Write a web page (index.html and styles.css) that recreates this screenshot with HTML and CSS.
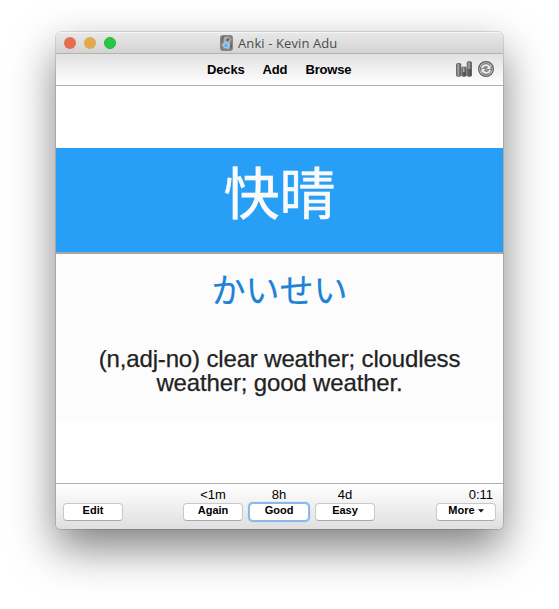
FILE: index.html
```html
<!DOCTYPE html>
<html lang="en">
<head>
<meta charset="utf-8">
<title>Anki - Kevin Adu</title>
<link rel="stylesheet" href="styles.css">
</head>
<body>
<main class="window">
  <header class="titlebar">
    <div class="lights"><i class="light close"></i><i class="light minimize"></i><i class="light expand"></i></div>
    <svg class="app-icon" width="13" height="16" viewBox="0 0 13 16">
      <rect x=".5" y=".5" width="12" height="15" rx="2" fill="#808284" stroke="#858688"/>
      <path d="M3 4Q5 1 9 2L11.500 4.500 9.500 7 11 10 9 14 4 13 2 10 4 7Z" fill="#b0b4b7"/>
      <path d="M5.500 5 8 3 10 4.500 7.500 6.500Z" fill="#626467"/>
      <path d="M2 2 4 1.500 3 6 1.500 8zM10 9.500 12 8v5l-2 1z" fill="#646669"/>
      <path d="M6 7.500 7.300 9.200 9.500 9.500 8 11.200 8.200 13.300 6 12.300 4 13.200 4.200 11 2.700 9.500 4.900 9.200Z" fill="#50b5fa" stroke="#c4e5fa" stroke-width=".5"/>
    </svg>
    <span class="title">Anki - Kevin Adu</span>
  </header>
  <nav class="toolbar">
    <div class="links"><a>Decks</a><a>Add</a><a>Browse</a></div>
    <div class="tools">
      <svg width="16" height="16" viewBox="0 0 16 16">
        <defs><linearGradient id="bar"><stop stop-color="#666"/><stop offset=".4" stop-color="#aaa"/><stop offset="1" stop-color="#444"/></linearGradient></defs>
        <g fill="url(#bar)" stroke="#5c5c5c" stroke-width=".8"><rect x=".5" y="2.500" width="4.300" height="12.800" rx="1"/><rect x="5.800" y="6" width="4.400" height="9.300" rx="1"/><rect x="11.200" y=".7" width="4.300" height="14.600" rx="1"/></g>
        <path d="M6.500 11h3.200v4H6.500zM12 8h3.200v7H12z" fill="#444" opacity=".7"/>
      </svg>
      <svg width="16" height="16" viewBox="0 0 16 16">
        <circle cx="8" cy="8" r="7.400" fill="#d0d0d0" stroke="#5c5c5c" stroke-width="1.200"/>
        <circle cx="8" cy="8" r="5.600" fill="#8c8c8c" stroke="#666" stroke-width=".7"/>
        <path d="M4 7C4.600 3.800 9.400 3.200 11 6M12 9C11.400 12.200 6.600 12.800 5 10" fill="none" stroke="#eee" stroke-width="1.700"/>
        <path d="M12.500 4v4H8.500zM3.500 12v-4h4z" fill="#eee"/>
      </svg>
    </div>
  </nav>
  <section class="review">
    <div class="question" lang="ja">快晴</div>
    <div class="answer">
      <div class="reading" lang="ja">かいせい</div>
      <p class="meaning">(n,adj-no) clear weather; cloudless weather; good weather.</p>
    </div>
  </section>
  <footer class="controls">
    <div class="control left"><span class="due"></span><button>Edit</button></div>
    <div class="choices">
      <div class="control"><span class="due">&lt;1m</span><button>Again</button></div>
      <div class="control"><span class="due">8h</span><button class="focused">Good</button></div>
      <div class="control"><span class="due">4d</span><button>Easy</button></div>
    </div>
    <div class="control right"><span class="due">0:11</span><button class="more">More<svg width="6" height="4" viewBox="0 0 6 4"><path d="M0 .3h6L3 3.500z" fill="#111"/></svg></button></div>
  </footer>
</main>
</body>
</html>
```
FILE: styles.css
```css
* { box-sizing: border-box; }
body { margin: 0; height: 609px; padding: 32px 56px 80px; overflow: hidden; background: #fff; font-family: "Liberation Sans", sans-serif; color: #000; }
.window { width: 447px; height: 497px; display: flex; flex-direction: column; overflow: hidden; border-radius: 5px; background: #fff; box-shadow: 0 0 0 1px rgba(0,0,0,.12), 0 19px 44px rgba(0,0,0,.5); }
.titlebar { flex: 0 0 22px; display: grid; grid-template-columns: 164px 18px 1fr; align-items: center; border-bottom: 1px solid #b3b3b3; background: linear-gradient(#e9e9e9, #d3d3d3); box-shadow: inset 0 1px #f5f5f5; }
.lights { display: flex; gap: 8px; padding-left: 8px; }
.light { width: 12px; height: 12px; border-radius: 50%; }
.close { background: #e46e50; }
.minimize { background: #e0aa4d; }
.expand { background: #2ac840; border: 1px solid #20b735; }
.title { font: 13px/20px "Open Sans", sans-serif; letter-spacing: .1px; color: #4b4b4b; white-space: nowrap; }
.toolbar { flex: 0 0 32px; display: grid; grid-template-columns: 1fr 56px; align-items: center; border-bottom: 1px solid #b0b0b0; background: linear-gradient(#e1e1e1, #fff); }
.links { display: flex; gap: 18px; padding-left: 151px; font-size: 13px; line-height: 16px; font-weight: bold; letter-spacing: -.15px; }
.tools { display: flex; gap: 6px; padding: 0 0 2px 9px; }
.review { flex: 1; padding-top: 62px; text-align: center; }
.question { height: 106px; border-bottom: 2px solid #a6a6a6; background: #279ff6; color: #fafafa; font: 56px/84px "Noto Sans CJK JP", sans-serif; -webkit-text-stroke: .6px #fafafa; }
.answer { height: 167px; background: #fcfcfc; }
.reading { height: 93px; color: #1d82d8; font: 34px/70px "Noto Sans CJK JP", sans-serif; -webkit-text-stroke: .2px #1d82d8; }
.meaning { margin: 0 auto; width: 380px; color: #222; font-size: 24px; line-height: 24px; letter-spacing: -.15px; -webkit-text-stroke: .25px #222; }
.controls { flex: 0 0 46px; display: flex; justify-content: space-between; padding: 3px 7px 0; border-top: 1px solid #afafaf; background: linear-gradient(#fff, #dfdfdf); }
.choices { display: flex; gap: 6px; margin-right: 1px; }
.control { display: flex; flex-direction: column; align-items: center; }
.due { height: 16px; font-size: 13px; line-height: 16px; }
.right .due { align-self: flex-end; padding-right: 3px; }
button { width: 60px; height: 18px; padding: 0 0 3px; border: 1px solid #c9c9c9; border-bottom-color: #aaa; border-radius: 4px; background: #fff; font: bold 11px/13px "Liberation Sans", sans-serif; color: #000; }
button.focused { border-color: #8bb8e9; box-shadow: 0 0 0 1px #8bb8e9, 0 0 1px 1px #8bb8e9; }
.more svg { margin-left: 3px; vertical-align: 1px; }
```
